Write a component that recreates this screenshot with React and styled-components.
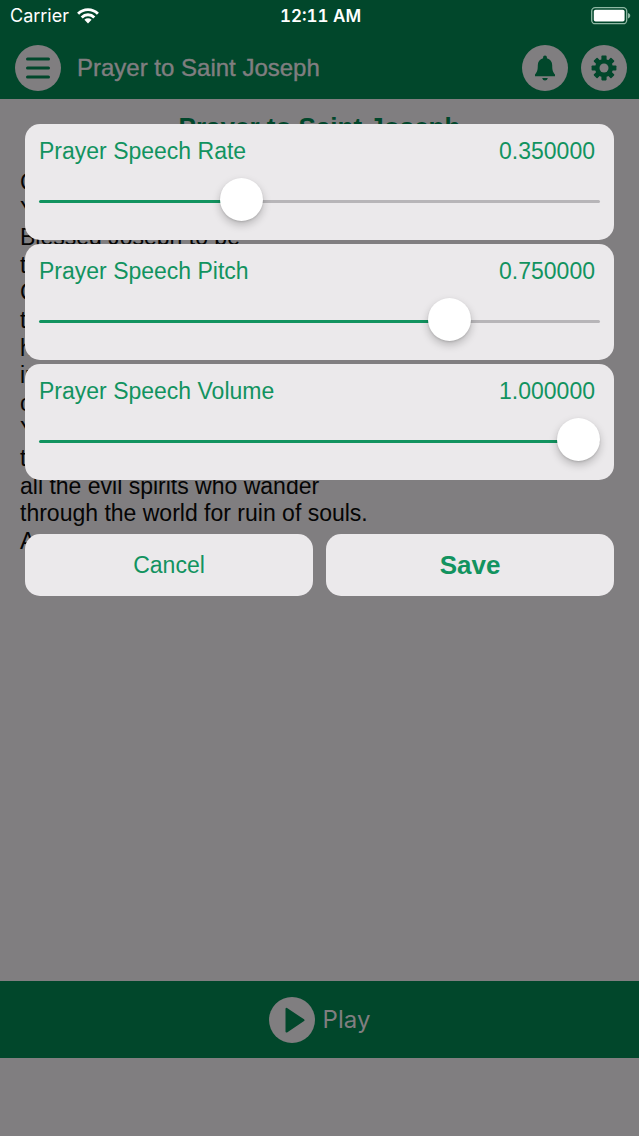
import React, { useState } from "react";
import styled, { createGlobalStyle } from "styled-components";

const deep = "#01472b";
const dim = "#807e80";
const green = "#12935f";
const panel = "#ebe9eb";

const GlobalStyle = createGlobalStyle`
  *, *::before, *::after { box-sizing: border-box; }
  body {
    margin: 0;
    background: ${dim};
    font-family: "Liberation Sans", Arial, sans-serif;
    font-size: 23px;
  }
  button { font: inherit; border: 0; padding: 0; cursor: pointer; }
`;

const Screen = styled.div`
  position: relative;
  display: flex;
  flex-direction: column;
  min-height: 100vh;
  padding-bottom: 78px;
`;

const Header = styled.header`
  background: ${deep};
`;

const StatusBar = styled.div`
  display: grid;
  grid-template-columns: 1fr auto 1fr;
  align-items: center;
  height: 32px;
  padding: 0 8px 0 10px;
  color: #fff;
  font: 400 18px/32px Inter, sans-serif;
`;

const Carrier = styled.span`
  display: flex;
  align-items: center;
  gap: 8px;
`;

const Clock = styled.time`
  font-size: 17px;
  font-weight: 600;
  font-variant-numeric: tabular-nums;
`;

const Battery = styled.svg`
  justify-self: end;
`;

const NavBar = styled.nav`
  display: flex;
  align-items: center;
  gap: 13px;
  height: 67px;
  padding: 5px 12px 0 15px;
`;

const NavTitle = styled.h1`
  flex: 1;
  margin: 0 0 0 3px;
  color: ${dim};
  font-size: 24px;
  font-weight: 400;
  line-height: 32px;
  -webkit-text-stroke: 0.4px ${dim};
`;

const Disc = styled.span`
  display: grid;
  place-items: center;
  flex: none;
  width: 46px;
  height: 46px;
  border-radius: 50%;
  background: ${dim};
  color: ${deep};
`;

const Article = styled.main`
  flex: 1;
  padding: 13px 20px;
  color: #050505;
`;

const PrayerTitle = styled.h2`
  margin: 0 0 27px;
  color: ${deep};
  font-size: 26px;
  line-height: 30px;
  text-align: center;
`;

const Prayer = styled.p`
  margin: 0;
  line-height: 1.2;
  white-space: pre-line;
`;

const PlayBar = styled.footer`
  display: flex;
  justify-content: center;
  height: 77px;
  background: ${deep};
`;

const PlayButton = styled.button`
  display: flex;
  align-items: center;
  gap: 8px;
  background: none;
  color: ${dim};

  && {
    font: 400 24px/32px Inter, sans-serif;
  }
`;

const Dialog = styled.form`
  position: absolute;
  top: 124px;
  left: 25px;
  right: 25px;
  color: ${green};
`;

const Settings = styled.div`
  display: grid;
  gap: 4px;
`;

const Card = styled.div`
  height: 116px;
  padding: 12px 14px;
  border-radius: 15px;
  background: ${panel};
`;

const CardHead = styled.div`
  display: flex;
  justify-content: space-between;
  padding-right: 5px;
  line-height: 30px;
`;

const Slider = styled.input`
  display: block;
  width: 100%;
  height: 43px;
  margin: 14px 0 0;
  appearance: none;
  background: none;

  &::-webkit-slider-runnable-track {
    height: 3px;
    border-radius: 2px;
    background: linear-gradient(
      to right,
      ${green} var(--fill),
      #b7b5b8 var(--fill)
    );
  }

  &::-webkit-slider-thumb {
    appearance: none;
    width: 43px;
    height: 43px;
    margin-top: -22px;
    border-radius: 50%;
    background: #fff;
    box-shadow: 0 4px 8px rgba(0, 0, 0, 0.22), 0 1px 2px rgba(0, 0, 0, 0.12);
  }
`;

const Actions = styled.div`
  display: grid;
  grid-template-columns: 1fr 1fr;
  gap: 13px;
  margin-top: 54px;
`;

const Action = styled.button`
  height: 62px;
  border-radius: 15px;
  background: ${panel};
  color: ${green};

  && {
    font-size: ${(p) => (p.$primary ? 26 : 23)}px;
    font-weight: ${(p) => (p.$primary ? 700 : 400)};
  }
`;

const lines = [
  "Glory be to God, Who chose",
  "You,",
  "Blessed Joseph to be",
  "the",
  "Christ",
  "to",
  "hear us",
  "in",
  "our",
  "You are",
  "the terror of",
  "all the evil spirits who wander",
  "through the world for ruin of souls.",
  "Amen.",
];

const WifiIcon = () => (
  <svg width="22" height="16" viewBox="0 0 22 16" aria-hidden="true">
    <g fill="none" stroke="#fff" strokeWidth="2.9">
      <path d="M1.1 5.7a14 14 0 0 1 19.8 0" />
      <path d="M4.7 9.4a8.9 8.9 0 0 1 12.6 0" />
    </g>
    <path d="M11 15.4 7.4 11.8a5.1 5.1 0 0 1 7.2 0z" fill="#fff" />
  </svg>
);

const BatteryIcon = () => (
  <Battery width="40" height="18" viewBox="0 0 40 18" role="img" aria-label="Battery full">
    <rect x="0.7" y="0.7" width="35" height="16" rx="3.5" fill="none" stroke="#8fb8a4" strokeWidth="1.3" />
    <rect x="2.8" y="2.8" width="30.8" height="11.8" rx="1.8" fill="#fff" />
    <path d="M37 6c3 .8 3 4.6 0 5.4z" fill="#8fb8a4" />
  </Battery>
);

const MenuIcon = () => (
  <svg width="24" height="22" viewBox="0 0 24 22" aria-hidden="true">
    <path d="M1.5 2h21M1.5 11h21M1.5 20h21" stroke="currentColor" strokeWidth="3" strokeLinecap="round" />
  </svg>
);

const BellIcon = () => (
  <svg width="22" height="26" viewBox="0 0 22 26" aria-hidden="true">
    <path
      d="M11 .4c1.2 0 1.9.9 1.9 1.9v1c3.3.9 5.3 3.5 5.3 7 0 5.3.9 7.2 2.8 9.1v1.9H1v-1.9c1.9-1.9 2.8-3.8 2.8-9.1 0-3.5 2-6.1 5.3-7v-1c0-1 .7-1.9 1.9-1.9z"
      fill="currentColor"
    />
    <path d="M8.2 23h5.6c-.4 1.7-1.4 2.5-2.8 2.5S8.6 24.7 8.2 23z" fill="currentColor" />
  </svg>
);

const GearIcon = () => (
  <svg width="26" height="26" viewBox="-13 -13 26 26" aria-hidden="true">
    {[0, 45, 90, 135].map((a) => (
      <rect key={a} x="-2.6" y="-12.4" width="5.2" height="24.8" rx="0.8" transform={`rotate(${a})`} fill="currentColor" />
    ))}
    <circle r="6.8" fill="none" stroke="currentColor" strokeWidth="4.6" />
    <circle r="4.5" fill={dim} />
  </svg>
);

const PlayIcon = () => (
  <svg width="46" height="46" viewBox="0 0 46 46" aria-hidden="true">
    <path d="M17.5 11.8v22.8l17-11.4z" fill="currentColor" stroke="currentColor" strokeWidth="2" strokeLinejoin="round" />
  </svg>
);

function Setting({ id, label, initial }) {
  const [value, setValue] = useState(initial);
  return (
    <Card>
      <CardHead>
        <label htmlFor={id}>{label}</label>
        <output htmlFor={id}>{value.toFixed(6)}</output>
      </CardHead>
      <Slider
        id={id}
        type="range"
        min="0"
        max="1"
        step="0.01"
        value={value}
        onChange={(e) => setValue(Number(e.target.value))}
        style={{ "--fill": `calc(22px + (100% - 43px) * ${value})` }}
      />
    </Card>
  );
}

export default function App() {
  return (
    <>
      <GlobalStyle />
      <Screen>
        <Header>
          <StatusBar>
            <Carrier>
              Carrier
              <WifiIcon />
            </Carrier>
            <Clock>12:11 AM</Clock>
            <BatteryIcon />
          </StatusBar>
          <NavBar>
            <Disc as="button" aria-label="Menu">
              <MenuIcon />
            </Disc>
            <NavTitle>Prayer to Saint Joseph</NavTitle>
            <Disc as="button" aria-label="Reminders">
              <BellIcon />
            </Disc>
            <Disc as="button" aria-label="Settings">
              <GearIcon />
            </Disc>
          </NavBar>
        </Header>
        <Article>
          <PrayerTitle>Prayer to Saint Joseph</PrayerTitle>
          <Prayer>{lines.join("\n")}</Prayer>
        </Article>
        <PlayBar>
          <PlayButton>
            <Disc>
              <PlayIcon />
            </Disc>
            Play
          </PlayButton>
        </PlayBar>
        <Dialog role="dialog" aria-label="Speech settings" onSubmit={(e) => e.preventDefault()}>
          <Settings>
            <Setting id="rate" label="Prayer Speech Rate" initial={0.35} />
            <Setting id="pitch" label="Prayer Speech Pitch" initial={0.75} />
            <Setting id="volume" label="Prayer Speech Volume" initial={1} />
          </Settings>
          <Actions>
            <Action type="button">Cancel</Action>
            <Action type="submit" $primary>
              Save
            </Action>
          </Actions>
        </Dialog>
      </Screen>
    </>
  );
}
